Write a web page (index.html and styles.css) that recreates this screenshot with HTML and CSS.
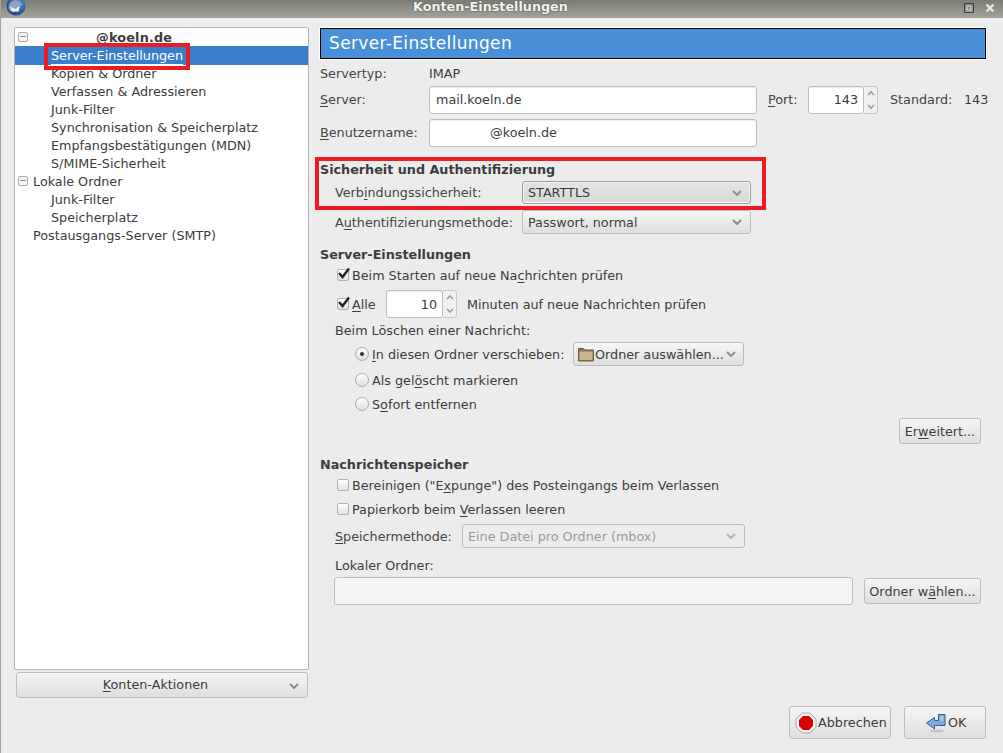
FILE: index.html
```html
<!DOCTYPE html>
<html lang="de">
<head>
<meta charset="utf-8">
<title>Konten-Einstellungen</title>
<link rel="stylesheet" href="styles.css">
</head>
<body>
<div class="window">
  <header class="titlebar">
    <svg class="app-icon" viewBox="0 0 20 20" width="20" height="20">
      <defs><radialGradient id="globe" cx=".6" cy=".35" r=".75"><stop offset="0" stop-color="#5b9bd8"/><stop offset="1" stop-color="#123a78"/></radialGradient></defs>
      <circle cx="10" cy="10" r="9.500" fill="url(#globe)"/>
      <path d="M2.500 12c0-4 3-7.500 7-8l5 2.500 2 2.500-3 .5-1.500 4-4 2.500-4-1z" fill="#8da3ba"/>
      <path d="M4 10.500l5 2.500 5-3-1.500 5.500H6z" fill="#eef2f6"/>
    </svg>
    <span class="title">Konten-Einstellungen</span>
    <svg class="win-btn max" viewBox="0 0 10 10" width="10" height="10"><path d="M.5.5h9v9h-9z" fill="none" stroke="#3c3d38"/><path d="M3 3h4v4H3z" fill="none" stroke="#dcdcd6"/></svg>
    <svg class="win-btn close" viewBox="0 0 10 10" width="10" height="10"><path d="M1.500 1.500l7 7M8.500 1.500l-7 7" stroke="#e8e8e2" stroke-width="2.400"/></svg>
  </header>
  <main class="dialog">
    <aside class="side">
      <div class="tree">
        <div class="tree-row root"><span class="twisty">−</span><strong class="acct">@koeln.de</strong></div>
        <div class="tree-row child selected"><span class="sel-text">Server-Einstellungen</span></div>
        <div class="tree-row child">Kopien &amp; Ordner</div>
        <div class="tree-row child">Verfassen &amp; Adressieren</div>
        <div class="tree-row child">Junk-Filter</div>
        <div class="tree-row child">Synchronisation &amp; Speicherplatz</div>
        <div class="tree-row child">Empfangsbestätigungen (MDN)</div>
        <div class="tree-row child">S/MIME-Sicherheit</div>
        <div class="tree-row root"><span class="twisty">−</span><span>Lokale Ordner</span></div>
        <div class="tree-row child">Junk-Filter</div>
        <div class="tree-row child">Speicherplatz</div>
        <div class="tree-row top">Postausgangs-Server (SMTP)</div>
      </div>
      <div class="btn actions"><span class="actions-label"><u>K</u>onten-Aktionen</span><svg class="chev" viewBox="0 0 10 6"><path d="M1 1l4 4 4-4" fill="none" stroke="#8c8c8c" stroke-width="2"/></svg></div>
    </aside>
    <section class="pane">
      <h1 class="banner">Server-Einstellungen</h1>
      <div class="row r-type"><span class="lab lab-main">Servertyp:</span><span>IMAP</span></div>
      <div class="row r-server">
        <span class="lab lab-main"><u>S</u>erver:</span>
        <span class="input in-server">mail.koeln.de</span>
        <span class="lab lab-port"><u>P</u>ort:</span>
        <span class="input in-port">143</span>
        <span class="spin"><svg viewBox="0 0 8 5"><path d="M1 4l3-3 3 3" fill="none" stroke="#999" stroke-width="1.600"/></svg><svg viewBox="0 0 8 5"><path d="M1 1l3 3 3-3" fill="none" stroke="#999" stroke-width="1.600"/></svg></span>
        <span class="lab lab-std">Standard:</span><span>143</span>
      </div>
      <div class="row r-user">
        <span class="lab lab-main"><u>B</u>enutzername:</span>
        <span class="input in-user">@koeln.de</span>
      </div>
      <h2 class="head h-sec">Sicherheit und Authentifizierung</h2>
      <div class="row r-conn">
        <span class="lab lab-sel">Verb<u>i</u>ndungssicherheit:</span>
        <span class="select sel-sec pressed">STARTTLS<svg class="chev" viewBox="0 0 10 6"><path d="M1 1l4 4 4-4" fill="none" stroke="#8c8c8c" stroke-width="2"/></svg></span>
      </div>
      <div class="row r-auth">
        <span class="lab lab-sel">A<u>u</u>thentifizierungsmethode:</span>
        <span class="select sel-sec">Passwort, normal<svg class="chev" viewBox="0 0 10 6"><path d="M1 1l4 4 4-4" fill="none" stroke="#8c8c8c" stroke-width="2"/></svg></span>
      </div>
      <h2 class="head h-srv">Server-Einstellungen</h2>
      <div class="row r-check1 ind">
        <span class="check on"><svg viewBox="0 0 14 12"><path d="M2 6l3.500 4L12 1.500" fill="none" stroke="#222" stroke-width="2.400"/></svg></span><span>Beim Starten auf neue Na<u>c</u>hrichten prüfen</span>
      </div>
      <div class="row r-check2 ind">
        <span class="check on"><svg viewBox="0 0 14 12"><path d="M2 6l3.500 4L12 1.500" fill="none" stroke="#222" stroke-width="2.400"/></svg></span><span class="alle"><u>A</u>lle</span>
        <span class="input in-min">10</span>
        <span class="spin"><svg viewBox="0 0 8 5"><path d="M1 4l3-3 3 3" fill="none" stroke="#999" stroke-width="1.600"/></svg><svg viewBox="0 0 8 5"><path d="M1 1l3 3 3-3" fill="none" stroke="#999" stroke-width="1.600"/></svg></span>
        <span class="after-spin">Minuten auf neue Nachrichten prüfen</span>
      </div>
      <div class="row r-del ind-text">Beim Löschen einer Nachricht:</div>
      <div class="row r-rad1 ind-radio">
        <span class="radio on"></span><span class="rad-text"><u>I</u>n diesen Ordner verschieben:</span>
        <span class="select sel-folder">
          <svg class="folder" viewBox="0 0 16 16" width="16" height="16"><path d="M.5 2.500h5l1.500 1.500h8.500v11H.5z" fill="#8f7650" stroke="#6d5a3c"/><path d="M1.500 5.500h13v8.500h-13z" fill="#c9b48e"/></svg>
          <span class="folder-text">Ordner auswählen...</span><svg class="chev" viewBox="0 0 10 6"><path d="M1 1l4 4 4-4" fill="none" stroke="#8c8c8c" stroke-width="2"/></svg>
        </span>
      </div>
      <div class="row r-rad2 ind-radio"><span class="radio"></span><span class="rad-text">Als gel<u>ö</u>scht markieren</span></div>
      <div class="row r-rad3 ind-radio"><span class="radio"></span><span class="rad-text">S<u>o</u>fort entfernen</span></div>
      <div class="row r-adv"><span class="btn btn-adv">Er<u>w</u>eitert...</span></div>
      <h2 class="head h-store">Nachrichtenspeicher</h2>
      <div class="row r-exp ind"><span class="check"></span><span class="check-text">Bereinigen ("E<u>x</u>punge") des Posteingangs beim Verlassen</span></div>
      <div class="row r-trash ind"><span class="check"></span><span class="check-text">Papierkorb beim <u>V</u>erlassen leeren</span></div>
      <div class="row r-store ind-text">
        <span class="lab lab-store"><u>S</u>peichermethode:</span>
        <span class="select sel-store disabled">Eine Datei pro Ordner (mbox)<svg class="chev" viewBox="0 0 10 6"><path d="M1 1l4 4 4-4" fill="none" stroke="#b4b4b4" stroke-width="2"/></svg></span>
      </div>
      <div class="row r-local ind-text">Lokaler Ordner:</div>
      <div class="row r-path ind-path">
        <span class="input in-path"></span>
        <span class="btn btn-path">Ordner w<u>ä</u>hlen...</span>
      </div>
      <footer class="foot">
        <span class="btn btn-cancel"><svg viewBox="0 0 22 22" width="22" height="22"><path d="M7 1h8l6 6v8l-6 6H7l-6-6V7z" fill="#f2f2f2" stroke="#a8a8a8"/><path d="M8 4h6l4 4v6l-4 4H8l-4-4V8z" fill="#d80000"/></svg>Abbrechen</span>
        <span class="btn btn-ok"><svg viewBox="0 0 22 22" width="22" height="22"><ellipse cx="12" cy="19" rx="7" ry="1.500" fill="#c4c4c4"/><path d="M13.500 2.500h6.500v11H9.500V17L1.500 11 9.500 5.500V8.500h4z" fill="#7fa9dc" stroke="#2f5f9e"/><path d="M15 4v5h3.500V4z" fill="#a9c6e8"/></svg>OK</span>
      </footer>
    </section>
  </main>
  <span class="mark mark-tree"></span>
  <span class="mark mark-sec"></span>
</div>
</body>
</html>
```
FILE: styles.css
```css
* { box-sizing: border-box; }
html, body { margin: 0; height: 100%; }
body { font: 12.75px/19px "DejaVu Sans", sans-serif; color: #3c3c3c; background: #ececec; }
u { text-underline-offset: 2px; text-decoration-thickness: 1px; }
.window { position: relative; width: 1003px; height: 753px; overflow: hidden; background: #ececec; border-left: 1px solid #a5a69d; }
.titlebar { height: 18px; display: flex; align-items: center; background: linear-gradient(#7b7c74, #a2a39a); color: #f4f4ee; position: relative; overflow: hidden; line-height: 18px; }
.app-icon { margin-left: 5px; margin-top: -6px; flex: none; }
.title { position: absolute; left: 412px; top: -2px; font-weight: 700; text-shadow: 0 0 2px #444; }
.win-btn.max { margin-left: auto; margin-right: 11px; margin-top: -2px; }
.win-btn.close { margin-right: 8px; margin-top: -2px; }
.dialog { display: flex; height: 735px; }
.side { width: 306px; margin-left: 13px; padding-top: 9px; flex: none; }
.tree { height: 643px; background: #fff; border: 1px solid #b4b4b4; border-radius: 2px; width: 295px; }
.tree-row { height: 18px; display: flex; align-items: center; white-space: nowrap; }
.root { padding-left: 3px; }
.child { padding-left: 36px; }
.top { padding-left: 18px; }
.twisty { width: 10px; height: 10px; border: 1px solid #aaa; border-radius: 2px; font-size: 9px; line-height: 7px; text-align: center; margin-right: 5px; color: #777; background: #f6f6f6; }
.acct { margin-left: 63px; letter-spacing: .2px; }
.selected { background: #3a7fcb; color: #fff; height: 19px; margin-bottom: -1px; }
.sel-text { box-shadow: 0 1px 0 #fff; line-height: 17px; }
.btn, .select { display: inline-flex; align-items: center; border: 1px solid #bcbcbc; border-radius: 3px; background: linear-gradient(#f6f6f6, #dedede); white-space: nowrap; flex: none; }
.actions { width: 292px; height: 26px; margin: 2px 0 0 2px; position: relative; justify-content: center; padding-right: 13px; line-height: 18px; }
.actions .chev { position: absolute; right: 8px; top: 10px; }
.chev { width: 10px; height: 6px; flex: none; margin-left: auto; }
.pane { width: 666px; padding-top: 10px; position: relative; flex: none; }
.banner { margin: 0; height: 31px; background: #4a90d9; border: 1px solid #000; box-shadow: 0 0 0 1px #fff; color: #fff; font-size: 17px; font-weight: 400; line-height: 29px; padding-left: 8px; letter-spacing: .35px; }
.head { margin: 0; height: 18px; font-size: 12.75px; font-weight: 700; line-height: 20px; }
.row { display: flex; align-items: center; white-space: nowrap; }
.lab { color: #444; flex: none; }
.lab-main { width: 109px; }
.r-type { height: 18px; margin-top: 5px; }
.r-server { height: 28px; margin-top: 4px; line-height: 18px; }
.r-user { height: 28px; margin-top: 5px; line-height: 18px; }
.input { display: flex; align-items: center; height: 28px; background: #fff; border: 1px solid #bcbcbc; border-radius: 3px; box-shadow: inset 0 1px 1px #eee; padding: 0 6px; flex: none; }
.in-server { width: 328px; }
.lab-port { margin-left: 11px; width: 40px; }
.in-port { width: 56px; justify-content: flex-end; padding-right: 5px; }
.spin { width: 14px; height: 28px; border: 1px solid #c8c8c8; border-left: 0; border-radius: 0 3px 3px 0; background: #f0f0f0; display: flex; flex-direction: column; justify-content: space-around; align-items: center; flex: none; }
.spin svg { width: 8px; height: 5px; }
.lab-std { margin-left: 12px; width: 74px; }
.in-user { width: 328px; padding-left: 60px; }
.h-sec { margin-top: 13px; }
.r-conn { height: 23px; margin-top: 3px; padding-left: 15px; }
.r-auth { height: 24px; margin-top: 6px; padding-left: 15px; }
.lab-sel { width: 187px; }
.select { padding: 0 8px 0 5px; }
.sel-sec { width: 229px; height: 100%; }
.pressed { border-color: #9d9d9d; background: linear-gradient(#e4e4e4, #d8d8d8); box-shadow: inset 0 0 0 1px #f4f4f4; }
.h-srv { margin-top: 11px; }
.ind { padding-left: 17px; }
.ind-text { padding-left: 15px; }
.check { width: 12px; height: 12px; border: 1px solid #b0b0b0; border-radius: 2px; background: linear-gradient(#fff, #e2e2e2); position: relative; margin-right: 3px; flex: none; }
.check svg { position: absolute; left: -1px; top: -3px; width: 14px; height: 12px; }
.r-check1 { height: 18px; margin-top: 3px; }
.r-check2 { height: 28px; margin-top: 6px; }
.alle { width: 34px; flex: none; }
.in-min { width: 57px; justify-content: flex-end; padding-right: 5px; }
.after-spin { margin-left: 10px; }
.r-del { height: 18px; margin-top: 3px; }
.ind-radio { padding-left: 35px; }
.radio { width: 14px; height: 14px; border: 1px solid #aaa; border-radius: 50%; background: linear-gradient(#fff, #dedede); margin-right: 3px; position: relative; flex: none; }
.radio.on::after { content: ""; position: absolute; left: 4px; top: 4px; width: 4px; height: 4px; border-radius: 50%; background: #333; }
.r-rad1 { height: 24px; margin-top: 3px; }
.r-rad2 { height: 18px; margin-top: 5px; }
.r-rad3 { height: 18px; margin-top: 6px; }
.rad-text { width: 201px; flex: none; }
.sel-folder { width: 171px; height: 24px; padding: 0 7px 0 2px; }
.folder { margin: 0 1px 0 2px; flex: none; }
.r-adv { height: 26px; margin-top: 5px; justify-content: flex-end; padding-right: 5px; }
.btn-adv { height: 26px; width: 82px; justify-content: center; }
.h-store { margin-top: 11px; }
.r-exp { height: 18px; margin-top: 3px; }
.r-trash { height: 18px; margin-top: 6px; }
.r-store { height: 24px; margin-top: 6px; }
.lab-store { width: 127px; }
.sel-store { width: 283px; height: 24px; color: #9a9a9a; }
.disabled { background: #ececec; }
.r-local { height: 18px; margin-top: 8px; }
.ind-path { height: 28px; margin-top: 3px; padding-left: 14px; }
.in-path { width: 519px; background: #f4f4f2; box-shadow: none; }
.btn-path { width: 117px; height: 26px; margin-left: 11px; justify-content: center; }
.foot { position: absolute; right: 0; top: 688px; display: flex; gap: 13px; }
.btn-cancel { width: 102px; height: 33px; padding-left: 5px; gap: 1px; }
.btn-ok { width: 82px; height: 33px; padding-left: 20px; gap: 1px; }
.mark { position: absolute; border: 4px solid #ed1c24; pointer-events: none; }
.mark-tree { left: 43px; top: 43px; width: 146px; height: 27px; }
.mark-sec { left: 314px; top: 157px; width: 451px; height: 53px; }
```
